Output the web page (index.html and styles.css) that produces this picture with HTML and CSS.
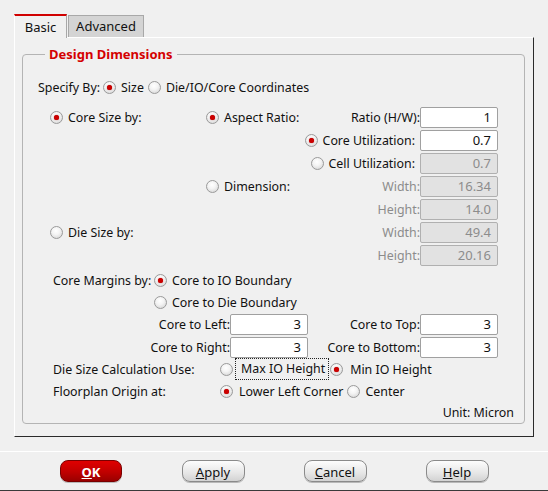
FILE: index.html
```html
<!DOCTYPE html>
<html>
<head>
<meta charset="utf-8">
<link rel="stylesheet" href="styles.css">
</head>
<body>
<div class="window">
  <div class="notebook">
    <div class="tabs">
      <div class="tab tab-active">Basic</div>
      <div class="tab tab-inactive">Advanced</div>
    </div>
    <div class="panel">
      <fieldset class="group">
        <legend class="group-title">Design Dimensions</legend>

        <div class="row row-specify">
          <span class="lbl">Specify By:</span>
          <span class="rb rb-tight"><span class="ind on"></span>Size</span>
          <span class="rb rb-tight"><span class="ind"></span>Die/IO/Core Coordinates</span>
        </div>

        <div class="size-grid">
          <div class="c1"><span class="rb indent"><span class="ind on"></span>Core Size by:</span></div>
          <div class="c2 split"><span class="rb"><span class="ind on"></span>Aspect Ratio:</span><span class="lbl">Ratio (H/W):</span></div>
          <div class="c3"><div class="entry">1</div></div>

          <div class="c1"></div>
          <div class="c2 end"><span class="rb rb-pad"><span class="ind on"></span>Core Utilization:</span></div>
          <div class="c3"><div class="entry">0.7</div></div>

          <div class="c1"></div>
          <div class="c2 end"><span class="rb rb-pad"><span class="ind"></span>Cell Utilization:</span></div>
          <div class="c3"><div class="entry disabled">0.7</div></div>

          <div class="c1"></div>
          <div class="c2 split"><span class="rb"><span class="ind"></span>Dimension:</span><span class="lbl dim">Width:</span></div>
          <div class="c3"><div class="entry disabled">16.34</div></div>

          <div class="c1"></div>
          <div class="c2 end"><span class="lbl dim">Height:</span></div>
          <div class="c3"><div class="entry disabled">14.0</div></div>

          <div class="c1"><span class="rb indent"><span class="ind"></span>Die Size by:</span></div>
          <div class="c2 end"><span class="lbl dim">Width:</span></div>
          <div class="c3"><div class="entry disabled">49.4</div></div>

          <div class="c1"></div>
          <div class="c2 end"><span class="lbl dim">Height:</span></div>
          <div class="c3"><div class="entry disabled">20.16</div></div>
        </div>

        <div class="row row-s row-margins">
          <span class="lbl col-margins">Core Margins by:</span>
          <span class="rb rb-m"><span class="ind on"></span>Core to IO Boundary</span>
        </div>
        <div class="row row-s row-die">
          <span class="col-margins"></span>
          <span class="rb rb-m"><span class="ind"></span>Core to Die Boundary</span>
        </div>
        <div class="row row-e row-first-e">
          <span class="lbl col-left">Core to Left:</span>
          <div class="entry">3</div>
          <span class="lbl col-top">Core to Top:</span>
          <div class="entry">3</div>
        </div>
        <div class="row row-e row-second-e">
          <span class="lbl col-left">Core to Right:</span>
          <div class="entry">3</div>
          <span class="lbl col-top">Core to Bottom:</span>
          <div class="entry">3</div>
        </div>
        <div class="row row-s">
          <span class="lbl col-calc">Die Size Calculation Use:</span>
          <span class="rb rb-focus-wrap"><span class="ind"></span><span class="focus">Max IO Height</span></span>
          <span class="rb rb-min"><span class="ind on"></span>Min IO Height</span>
        </div>
        <div class="row row-s">
          <span class="lbl col-calc">Floorplan Origin at:</span>
          <span class="rb rb-lower"><span class="ind on"></span>Lower Left Corner</span>
          <span class="rb rb-center"><span class="ind"></span>Center</span>
        </div>
        <div class="row row-unit">
          <span class="lbl">Unit: Micron</span>
        </div>
      </fieldset>
    </div>
  </div>
  <div class="buttonbar">
    <div class="bcell"><button class="btn btn-ok"><u>O</u>K</button></div>
    <div class="bcell"><button class="btn"><u>A</u>pply</button></div>
    <div class="bcell"><button class="btn"><u>C</u>ancel</button></div>
    <div class="bcell"><button class="btn"><u>H</u>elp</button></div>
  </div>
</div>
</body>
</html>
```

FILE: styles.css
```css
* { box-sizing: border-box; }
html, body {
  margin: 0;
  padding: 0;
  background: #f0f0f0;
}
body {
  font-family: "Noto Sans", "Open Sans", sans-serif;
  font-size: 12.4px;
  color: #111;
}
.window {
  width: 548px;
  height: 491px;
  position: relative;
  background: #f0f0f0;
  border-bottom: 1px solid #3a3a3a;
}
.notebook {
  padding: 14px 0 0 14px;
  width: 534px;
}
.tabs {
  display: flex;
  height: 23px;
  align-items: flex-end;
}
.tab {
  height: 23px;
  display: flex;
  align-items: center;
  justify-content: center;
  line-height: 1;
  font-size: 13px;
}
.tab-active {
  width: 53px;
  background: #f0f0f0;
  border-top: 2px solid #d00000;
  border-left: 1px solid #ffffff;
  border-right: 1px solid #a8a8a8;
  padding-top: 1px;
  position: relative;
  z-index: 2;
  margin-bottom: -1px;
  height: 24px;
}
.tab-inactive {
  width: 76px;
  height: 22px;
  margin-left: 1px;
  background: #d4d4d4;
  border: 1px solid #a8a8a8;
  border-bottom: none;
}
.panel {
  height: 400px;
  border-top: 1px solid #ffffff;
  border-left: 1px solid #ffffff;
  border-right: 1px solid #2a2a2a;
  border-bottom: 1px solid #2a2a2a;
  padding: 7px 8px 0 7px;
}
.group {
  margin: 0;
  width: 503px;
  height: 379px;
  border: 1px solid #b4b4b4;
  border-radius: 4px;
  padding: 13px 10px 0 15px;
}
.group-title {
  margin-left: 7px;
  padding: 0 4px;
  font-weight: bold;
  font-size: 13px;
  color: #d40000;
  line-height: 18px;
}
.row {
  display: flex;
  align-items: center;
  white-space: nowrap;
}
.row-specify { height: 23px; margin-bottom: 7px; }
.row-s { height: 22px; }
.row-e { height: 23px; }
.row-margins { margin-top: 2px; }
.row-die { height: 22px; }
.row-second-e { height: 22px; }
.row-unit { height: 20px; justify-content: flex-end; }

.lbl { white-space: nowrap; }
.dim { color: #8c8c8c; }

.rb {
  display: inline-flex;
  align-items: center;
  white-space: nowrap;
}
.ind {
  width: 13px;
  height: 13px;
  border-radius: 50%;
  border: 1px solid #9a9a9a;
  background: radial-gradient(circle at 45% 35%, #ffffff 0%, #f4f4f4 40%, #cfcfcf 100%);
  margin-right: 5px;
  display: inline-flex;
  align-items: center;
  justify-content: center;
  flex: none;
}
.ind.on::after {
  content: "";
  width: 5px;
  height: 5px;
  border-radius: 50%;
  background: #cc0000;
  box-shadow: 0 0 1px #900;
}
.rb-tight { margin-left: 4px; }
.row-specify .lbl + .rb-tight { margin-left: 3px; }
.rb-m { margin-left: 1px; }

.size-grid {
  display: grid;
  grid-template-columns: 168px 214px 78px;
  grid-auto-rows: 23px;
}
.size-grid > div {
  display: flex;
  align-items: center;
  white-space: nowrap;
}
.indent { margin-left: 12px; }
.split { justify-content: space-between; }
.end { justify-content: flex-end; }
.rb-pad { padding-right: 5px; }

.entry {
  width: 78px;
  height: 21px;
  background: #ffffff;
  border: 1px solid #a0a0a0;
  border-radius: 2px;
  text-align: right;
  padding-right: 6px;
  line-height: 19px;
  font-size: 13px;
  flex: none;
}
.entry.disabled {
  background: #e2e2e2;
  color: #8c8c8c;
  border-color: #b0b0b0;
}

.col-margins { width: 115px; padding-left: 15px; flex: none; }
.col-left { width: 192px; text-align: right; flex: none; }
.col-top { width: 112px; text-align: right; flex: none; }
.col-calc { width: 182px; padding-left: 15px; flex: none; }

.rb-focus-wrap .ind { margin-right: 2px; }
.focus {
  border: 1px dotted #222;
  padding: 0 3px 0 5px;
  line-height: 20px;
}
.rb-min { margin-left: 1px; }
.rb-min .ind { margin-right: 7px; }
.rb-lower .ind { margin-right: 6px; }
.rb-center { margin-left: 4px; }

.buttonbar {
  margin-top: 14px;
  border-top: 1px solid #ffffff;
  height: 38px;
  display: grid;
  grid-template-columns: repeat(4, 122px);
  padding-left: 30px;
  align-items: center;
}
.bcell {
  display: flex;
  justify-content: center;
}
.btn {
  width: 63px;
  height: 22px;
  margin: 0;
  padding: 2px 0 0;
  font-family: inherit;
  font-size: 13px;
  color: #111;
  border: 1px solid #8a8a8a;
  border-radius: 8px;
  background: linear-gradient(#fdfdfd, #e6e6e6 60%, #d2d2d2);
  box-shadow: 0 1px 0 #b8b8b8;
  line-height: 18px;
}
.btn-ok {
  width: 62px;
  color: #ffffff;
  font-weight: bold;
  border-color: #7a0000;
  background: linear-gradient(#e00000, #c00000 55%, #9a0000);
}
```
